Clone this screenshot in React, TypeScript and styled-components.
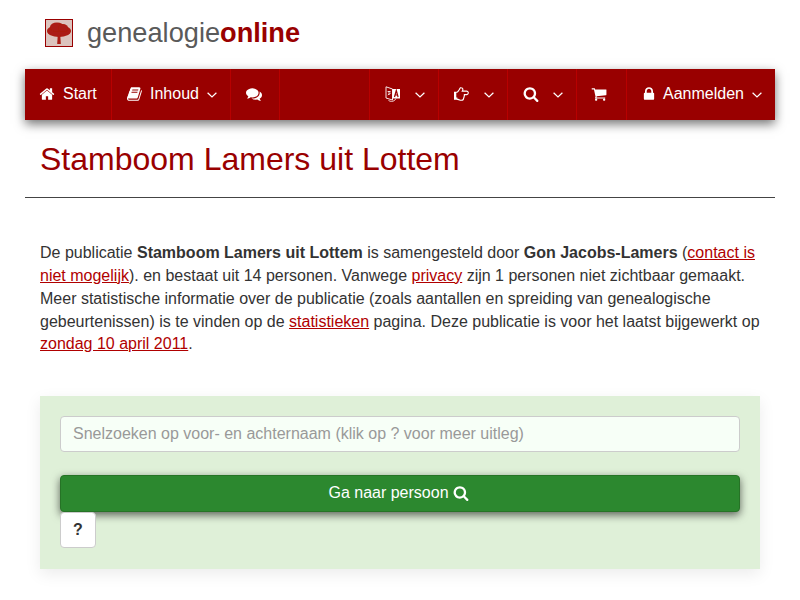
import React from "react";
import styled, { createGlobalStyle } from "styled-components";

const Global = createGlobalStyle`
  html, body { margin: 0; padding: 0; background: #fff; }
  body { font-family: "Liberation Sans", Arial, sans-serif; font-size: 16px; color: #333; }
  * { box-sizing: border-box; }
`;
const Page = styled.div`
  width: 750px;
  margin: 0 25px;
  height: 600px;
`;
const Brand = styled.header`
  height: 69px;
  display: flex;
  align-items: center;
  padding: 0 0 3px 20px;
  gap: 14px;
`;
const Logo = styled.svg`
  width: 28px;
  height: 28px;
  display: block;
`;
const BrandName = styled.div`
  font-size: 27.2px;
  color: #5a5a5a;
  line-height: 32px;
  b { color: #990000; font-weight: 700; }
`;
const Nav = styled.nav`
  height: 51px;
  background: #990000;
  display: flex;
  box-shadow: 0 4px 10px rgba(0, 0, 0, 0.55);
  color: #fff;
`;
const NavItem = styled.div<{ $w: number; $pad?: number; $last?: boolean }>`
  width: ${(p) => p.$w}px;
  flex: none;
  display: flex;
  align-items: center;
  padding: 0 0 1px ${(p) => p.$pad ?? 15}px;
  border-right: ${(p) => (p.$last ? "none" : "1px solid #b80000")};
  font-size: 16px;
`;
const Spacer = styled.div`
  flex: 1;
  border-right: 1px solid #b80000;
`;
const Glyph = styled.svg<{ $mr?: number }>`
  width: 16px;
  height: 16px;
  flex: none;
  display: block;
  fill: #fff;
  margin-right: ${(p) => p.$mr ?? 7}px;
`;
const Chevron = styled.svg<{ $ml?: number }>`
  width: 10px;
  height: 6px;
  margin-left: ${(p) => p.$ml ?? 8}px;
  margin-top: 2px;
  display: block;
`;
const Title = styled.h1`
  margin: 0;
  padding: 0 15px;
  height: 78px;
  border-bottom: 1px solid #444;
  font-size: 32px;
  font-weight: 400;
  line-height: 78px;
  color: #990000;
`;
const Intro = styled.p`
  margin: 44px 0 0;
  padding: 0 15px;
  line-height: 22.857px;
  font-size: 16px;
  a { color: #b00000; text-decoration: underline; }
`;
const Panel = styled.section`
  margin: 40px 15px 0;
  height: 173px;
  padding: 20px 20px;
  background: #dff0d8;
  box-shadow: 0 5px 15px rgba(0, 0, 0, 0.08);
`;
const Input = styled.input`
  display: block;
  width: 100%;
  height: 36px;
  padding: 0 12px;
  border: 1px solid #ccc;
  border-radius: 4px;
  background: #f7fff7;
  font: 16px "Liberation Sans", Arial, sans-serif;
  &::placeholder { color: #999; opacity: 1; }
`;
const GoButton = styled.button`
  display: flex;
  align-items: center;
  justify-content: center;
  gap: 4px;
  width: 100%;
  height: 37px;
  margin-top: 23px;
  padding: 0 3px 2px 0;
  border: 1px solid #267326;
  border-radius: 4px;
  background: #2c882f;
  color: #fff;
  font: 16px "Liberation Sans", Arial, sans-serif;
  box-shadow: 0 3px 8px rgba(0, 0, 0, 0.6);
`;
const HelpButton = styled.button`
  display: block;
  width: 36px;
  height: 36px;
  margin-top: 0;
  padding: 0 0 1px;
  border: 1px solid #ccc;
  border-radius: 4px;
  background: #fff;
  color: #333;
  font: 700 16px "Liberation Sans", Arial, sans-serif;
`;

const P = {
  home: "M1472 992v480q0 26-19 45t-45 19h-384v-384h-256v384h-384q-26 0-45-19t-19-45v-480q0-1 .5-3t.5-3l575-474 575 474q1 2 1 6zm223-69l-62 74q-8 9-21 11h-3q-13 0-21-7l-692-577-692 577q-12 8-24 7-13-2-21-11l-62-74q-8-10-7-23.5t11-21.5l719-599q32-26 76-26t76 26l244 204v-195q0-14 9-23t23-9h192q14 0 23 9t9 23v408l219 182q10 8 11 21.5t-7 23.5z",
  book: "M1639 478q40 57 18 129l-275 906q-19 64-76.5 107.5t-122.5 43.5h-923q-77 0-148.5-53.5t-99.5-131.5q-24-67-2-127 0-4 3-27t4-37q1-8-3-21.5t-3-19.5q2-11 8-21t16.5-23.5 16.5-23.5q23-38 45-91.5t30-91.5q3-10 .5-30t-.5-28q3-11 17-28t17-23q21-36 42-92t25-90q1-9-2.5-32t.5-28q4-13 22-30.5t22-22.5q19-26 42.5-84.5t27.5-96.5q1-8-3-25.5t-2-26.5q2-8 9-18t18-23 17-21q8-12 16.5-30.5t15-35 16-36 19.5-32 26.5-23.5 36-11.5 47.5 5.5l-1 3q38-9 51-9h761q74 0 114 56t18 130l-274 906q-36 119-71.5 153.5t-128.5 34.5h-869q-27 0-38 15-11 16-1 43 24 70 144 70h923q29 0 56-15.5t35-41.5l300-987q7-22 5-57 38 15 59 43zm-1064 2q-4 13 2 22.5t20 9.5h608q13 0 25.5-9.5t16.5-22.5l21-64q4-13-2-22.5t-20-9.5h-608q-13 0-25.5 9.5t-16.5 22.5zm-83 256q-4 13 2 22.5t20 9.5h608q13 0 25.5-9.5t16.5-22.5l21-64q4-13-2-22.5t-20-9.5h-608q-13 0-25.5 9.5t-16.5 22.5z",
  comments: "M1408 768q0 139-94 257t-256.5 186.5-353.5 68.5q-86 0-176-16-124 88-278 128-36 9-86 16h-3q-11 0-20.5-8t-11.5-21q-1-3-1-6.5t.5-6.5 2-6l2.5-5 3.5-5.5 4-5 4.5-5 4-4.5q5-6 23-25t26-29.5 22.5-29 25-38.5 20.5-44q-124-72-195-177t-71-224q0-139 94-257t256.5-186.5 353.5-68.5 353.5 68.5 256.5 186.5 94 257zm384 256q0 120-71 224.5t-195 176.5q10 24 20.5 44t25 38.5 22.5 29 26 29.5 23 25q1 1 4 4.5t4.5 5 4 5 3.5 5.5l2.5 5 2 6 .5 6.5-1 6.5q-3 14-13 22t-22 7q-50-7-86-16-154-40-278-128-90 16-176 16-271 0-472-132 58 4 88 4 161 0 309-45t264-129q125-92 192-212t67-254q0-77-23-152 129 71 204 178t75 230z",
  hand: "M384 1344q0-26-19-45t-45-19-45 19-19 45 19 45 45 19 45-19 19-45zm1152-576q0-51-39-89.5t-89-38.5h-576q0-20 15-48.5t33-55 33-68 15-84.5q0-67-44.5-97.5t-115.5-30.5q-24 0-90 139-24 44-37 65-40 64-112 145-71 81-101 106-69 57-140 57h-32v640h32q72 0 167 32t193.5 64 179.5 32q189 0 189-167 0-26-5-56 30-16 47.5-52.5t17.5-73.5-18-69q53-50 53-119 0-25-10-55.5t-25-47.5h331q52 0 90-38t38-90zm128-1q0 105-76 181t-181 76h-169q-4 62-37 119 3 21 3 43 0 101-60 178 1 139-85 219.5t-227 80.5q-133 0-322-69-164-59-223-59h-288q-53 0-90.5-37.5t-37.5-90.5v-640q0-53 37.5-90.5t90.5-37.5h288q10 0 21.5-4.5t23.5-14 22.5-18 24-22.5 20.5-21.5 19-21.5 14-17q65-74 100-129 13-21 33-62t37-72 40.5-63 55-49.5 69.5-17.5q125 0 206.5 67t81.5 189q0 68-22 128h374q104 0 180 76t76 181z",
  search: "M1216 832q0-185-131.5-316.5t-316.5-131.5-316.5 131.5-131.5 316.5 131.5 316.5 316.5 131.5 316.5-131.5 131.5-316.5zm512 832q0 52-38 90t-90 38q-54 0-90-38l-343-342q-179 124-399 124-143 0-273.5-55.5t-225-150-150-225-55.5-273.5 55.5-273.5 150-225 225-150 273.5-55.5 273.5 55.5 225 150 150 225 55.5 273.5q0 220-124 399l343 343q37 37 37 90z",
  cart: "M704 1536q0 52-38 90t-90 38-90-38-38-90 38-90 90-38 90 38 38 90zm896 0q0 52-38 90t-90 38-90-38-38-90 38-90 90-38 90 38 38 90zm128-1088v512q0 24-16.5 42.5t-40.5 21.5l-1044 122q13 60 13 70 0 16-24 64h920q26 0 45 19t19 45-19 45-45 19h-1024q-26 0-45-19t-19-45q0-11 8-31.5t16-36 21.5-40 15.5-29.5l-177-823h-204q-26 0-45-19t-19-45 19-45 45-19h256q16 0 28.5 6.5t19.5 15.5 13 24.5 8 26 5.5 29.5 4.5 26h1201q26 0 45 19t19 45z",
  lock: "M640 768h512v-192q0-106-75-181t-181-75-181 75-75 181v192zm832 96v576q0 40-28 68t-68 28h-960q-40 0-68-28t-28-68v-576q0-40 28-68t68-28h32v-192q0-184 132-316t316-132 316 132 132 316v192h32q40 0 68 28t28 68z",
};

const Icon = ({ d, mr }: { d: string; mr?: number }) => (
  <Glyph viewBox="0 0 1792 1792" $mr={mr}><path d={d} /></Glyph>
);
const Down = ({ ml }: { ml?: number }) => (
  <Chevron viewBox="0 0 10 6" fill="none" stroke="#fff" strokeWidth="1.2" $ml={ml}>
    <path d="M.6.7 5 5 9.4.7" />
  </Chevron>
);
const Lang = () => (
  <Glyph viewBox="0 0 16 16" $mr={14}>
    <path d="M1 .8 7.5 3v11L1 12z" fill="none" stroke="#fff" strokeWidth=".9" />
    <path d="M7.5 3H15v9.5H7.5z" fill="#fff" />
    <path d="M2.6 5.5h3M4 5v4M2.8 9l3-2" stroke="#fff" strokeWidth=".8" fill="none" />
    <path d="M9.5 11l1.8-6.5 1.8 6.5M10.2 9h2.2" stroke="#990000" strokeWidth="1.2" fill="none" />
    <path d="M3.5 14.5c2 1.2 4 1.2 6 0l1.5-2" stroke="#fff" strokeWidth=".8" fill="none" />
  </Glyph>
);

export default function App() {
  return (
    <Page>
      <Global />
      <Brand>
        <Logo viewBox="0 0 28 28">
          <defs>
            <filter id="soft"><feGaussianBlur stdDeviation="0.7" /></filter>
          </defs>
          <rect x=".5" y=".5" width="27" height="27" fill="#dcc4be" stroke="#990000" />
          <g filter="url(#soft)" fill="#ab1f12">
            <ellipse cx="14" cy="12" rx="12" ry="6" />
            <ellipse cx="12" cy="8" rx="7" ry="4.5" />
            <ellipse cx="18" cy="9" rx="5" ry="4" />
            <path d="M12.8 15h2.4l.6 10h-3.6z" />
          </g>
        </Logo>
        <BrandName>genealogie<b>online</b></BrandName>
      </Brand>
      <Nav>
        <NavItem $w={87} $pad={14}><Icon d={P.home} mr={8} />Start</NavItem>
        <NavItem $w={119}><Icon d={P.book} />Inhoud<Down /></NavItem>
        <NavItem $w={49}><Icon d={P.comments} /></NavItem>
        <Spacer />
        <NavItem $w={69}><Lang /><Down ml={0} /></NavItem>
        <NavItem $w={69}><Icon d={P.hand} mr={14} /><Down ml={0} /></NavItem>
        <NavItem $w={69}><Icon d={P.search} mr={14} /><Down ml={0} /></NavItem>
        <NavItem $w={50} $pad={14}><Icon d={P.cart} /></NavItem>
        <NavItem $w={148} $last $pad={14}><Icon d={P.lock} mr={6} />Aanmelden<Down /></NavItem>
      </Nav>
      <Title>Stamboom Lamers uit Lottem</Title>
      <Intro>
        De publicatie <b>Stamboom Lamers uit Lottem</b> is samengesteld door <b>Gon Jacobs-Lamers</b> (<a href="#c">contact is niet mogelijk</a>). en bestaat uit 14 personen. Vanwege <a href="#p">privacy</a> zijn 1 personen niet zichtbaar gemaakt. Meer statistische informatie over de publicatie (zoals aantallen en spreiding van genealogische gebeurtenissen) is te vinden op de <a href="#s">statistieken</a> pagina. Deze publicatie is voor het laatst bijgewerkt op <a href="#d">zondag 10 april 2011</a>.
      </Intro>
      <Panel>
        <Input placeholder="Snelzoeken op voor- en achternaam (klik op ? voor meer uitleg)" />
        <GoButton>Ga naar persoon <svg width="16" height="16" viewBox="0 0 1792 1792" fill="#fff"><path d={P.search} /></svg></GoButton>
        <HelpButton>?</HelpButton>
      </Panel>
    </Page>
  );
}
